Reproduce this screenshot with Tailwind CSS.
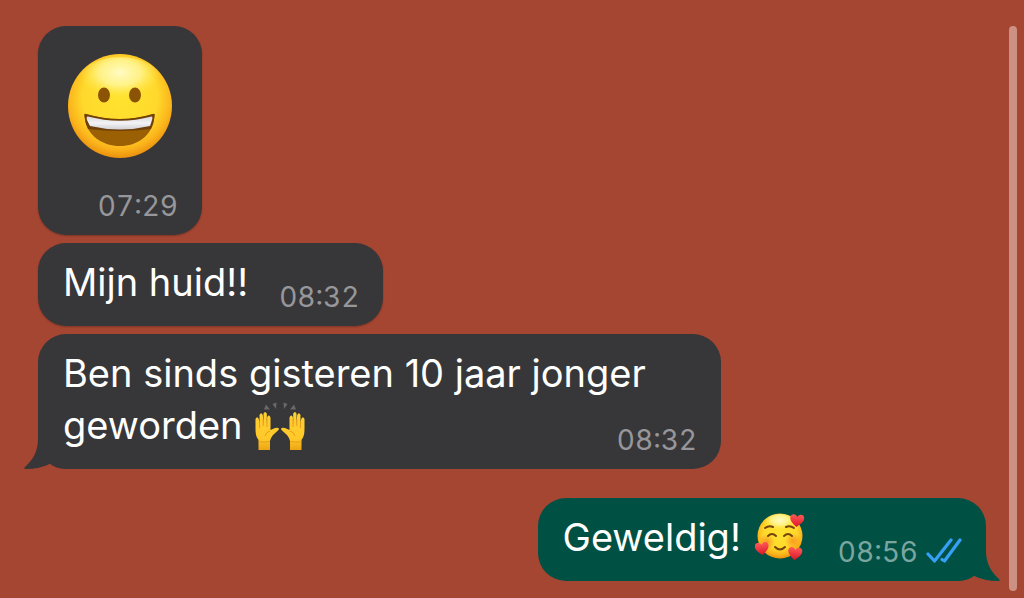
<!DOCTYPE html>
<html lang="nl">
<head>
<meta charset="utf-8">
<meta name="viewport" content="width=device-width, initial-scale=1">
<title>Chat</title>
<script src="https://cdn.jsdelivr.net/npm/@tailwindcss/browser@4"></script>
</head>
<body class="min-h-screen bg-[#a54632] font-['Inter','Liberation_Sans',sans-serif] text-white">
<div class="flex min-h-screen items-stretch">
  <main class="flex grow flex-col items-start gap-2 pt-[26px] pl-[38px] pr-[23px] pb-4">

    <article class="flex w-[164px] flex-col items-center rounded-[28px] bg-[#373739] pt-7 pb-[13px] shadow-[0_1px_2px_rgba(0,0,0,0.25)]">
      <svg class="size-[104px]" viewBox="0 0 104 104" role="img" aria-label="😀">
        <defs>
          <radialGradient id="face" cx="50%" cy="42%" r="60%">
            <stop offset="0" stop-color="#ffe32f"/><stop offset=".6" stop-color="#ffd92c"/><stop offset=".82" stop-color="#fbb51b"/><stop offset="1" stop-color="#e8880c"/>
          </radialGradient>
          <radialGradient id="shine" cx="50%" cy="30%" r="50%">
            <stop offset="0" stop-color="#fffbc4"/><stop offset=".5" stop-color="#fff79c" stop-opacity=".8"/><stop offset="1" stop-color="#ffe840" stop-opacity="0"/>
          </radialGradient>
          <linearGradient id="teeth" x1="0" y1="0" x2="0" y2="1">
            <stop offset="0" stop-color="#d8d8dc"/><stop offset=".5" stop-color="#f4f4f7"/><stop offset="1" stop-color="#d0d0d4"/>
          </linearGradient>
        </defs>
        <circle cx="52" cy="52" r="52" fill="url(#face)"/>
        <ellipse cx="52" cy="29" rx="42" ry="26" fill="url(#shine)"/>
        <ellipse cx="36" cy="41" rx="6" ry="7.5" fill="#8b5306"/>
        <ellipse cx="67" cy="41" rx="6" ry="7.5" fill="#8b5306"/>
        <path d="M18 60Q52 70 85 60Q87 59 86.500 62C85 82 69 92 52 92S18 82 16.500 62Q16 59 18 60Z" fill="#9a6003"/>
        <path d="M18 60Q52 70 85 60Q87 59 86.500 62Q86 69 83 75Q52 79 20 75Q17 69 16.500 62Q16 59 18 60Z" fill="#70400a"/>
        <path d="M20 62.500Q52 71 83.500 62.500Q85 62 84 66L82 72Q52 79 22 72L19 66Q18 62 20 62.500Z" fill="url(#teeth)"/>
      </svg>
      <time class="mt-8 mr-6 self-end text-[28px] leading-8 text-[#97979b] tabular-nums">07:29</time>
    </article>

    <article class="flex items-end gap-[31px] rounded-[28px] bg-[#373739] pt-[13px] pr-6 pb-[13px] pl-[25px] shadow-[0_1px_2px_rgba(0,0,0,0.25)]">
      <p class="pb-[5px] text-[38px] leading-[52px]">Mijn huid!!</p>
      <time class="text-[28px] leading-8 text-[#97979b] tabular-nums">08:32</time>
    </article>

    <article class="relative grid w-[683px] max-w-full rounded-[28px] bg-[#373739] pt-[13px] pr-6 pb-[13px] pl-[25px]">
      <svg class="absolute bottom-0 -left-[14px] h-[40px] w-[42px]" viewBox="0 0 42 40" aria-hidden="true">
        <path d="M14 0V10C14 22 9 31 1 38Q-1 40 2 40Q16 40 26 35Q32 40 42 40V0Z" fill="#373739"/>
        <path d="M10 40Q20 38 26 35Q32 40 42 40Z" fill="#a54632"/>
      </svg>
      <p class="relative col-start-1 row-start-1 pb-[5px] text-[38px] leading-[52px]">Ben sinds gisteren 10 jaar jonger<br>geworden
        <svg class="ml-0.5 inline-block h-[50px] w-[50px] align-[-11px]" viewBox="0 0 50 50" role="img" aria-label="🙌">
          <defs>
            <linearGradient id="skin" x1="0" y1="0" x2="0" y2="1"><stop offset="0" stop-color="#ffcf35"/><stop offset=".7" stop-color="#ffc928"/><stop offset="1" stop-color="#eca414"/></linearGradient>
            <g id="hand">
              <path d="M3.500 50V40C1 37 .500 33 .500 29V19Q2 15.500 3.800 19L4.500 25V15Q6 11.500 7.800 15L8.500 24V13.500Q10 10.500 11.800 13.500V24L12.200 17Q14 14 15.500 17.500V30L20 28Q25 27 23.500 30L18 35Q15.500 38 15 41V50Z" fill="url(#skin)"/>
              <path d="M4.500 28V21M8.200 26V19M12 27V19M15 31Q11 32 10 36M3.500 41.500Q9 43 15 41.500" fill="none" stroke="#e5981b" stroke-width=".9"/>
            </g>
          </defs>
          <use href="#hand"/><use href="#hand" transform="translate(50 0) scale(-1 1)"/>
          <g fill="#68686b"><path d="M11 4.500L15 9.500L9 9.500Z"/><path d="M17.500 4L21.500 2.500L21 9Z"/><path d="M28.500 2.500L32.500 4L29 9Z"/><path d="M39 4.500L41 9.500L35 9.500Z"/></g>
        </svg></p>
      <time class="relative col-start-1 row-start-1 self-end justify-self-end text-[28px] leading-8 text-[#97979b] tabular-nums">08:32</time>
    </article>

    <article class="relative mt-[21px] flex items-end self-end rounded-[28px] bg-[#015044] pt-[13px] pr-6 pb-[13px] pl-[25px]">
      <svg class="absolute bottom-0 -right-[14px] h-[40px] w-[42px]" viewBox="0 0 42 40" aria-hidden="true">
        <path d="M28 0V10C28 22 33 31 41 38Q43 40 40 40Q26 40 16 35Q10 40 0 40V0Z" fill="#015044"/>
        <path d="M32 40Q22 38 16 35Q10 40 0 40Z" fill="#a54632"/>
      </svg>
      <p class="relative flex items-center gap-[14px] pb-[5px] text-[38px] leading-[52px]">Geweldig!
        <svg class="size-[50px]" viewBox="0 0 50 50" role="img" aria-label="🥰">
          <defs>
            <linearGradient id="heart" x1="0" y1="0" x2="0" y2="1"><stop offset="0" stop-color="#ff5a55"/><stop offset="1" stop-color="#d9162b"/></linearGradient>
            <path id="h" d="M7 13C3 10 0 7 0 4C0 0 5-1 7 3C9-1 14 0 14 4C14 7 11 10 7 13Z" fill="url(#heart)"/>
            <radialGradient id="blush"><stop offset="0" stop-color="#f77f1c" stop-opacity=".7"/><stop offset="1" stop-color="#f77f1c" stop-opacity="0"/></radialGradient>
          </defs>
          <circle cx="25" cy="24" r="22.500" fill="url(#face)"/>
          <ellipse cx="25" cy="12" rx="17" ry="10" fill="url(#shine)"/>
          <circle cx="12" cy="30" r="8" fill="url(#blush)"/><circle cx="38" cy="29" r="8" fill="url(#blush)"/>
          <g fill="none" stroke="#74440a" stroke-width="2" stroke-linecap="round">
            <path d="M10 16Q14 13 18 15M31 15Q35 13 39 16M13 24Q17 20 21 24M29 24Q33 20 37 24M20 35Q25 40 30 35"/>
          </g>
          <use href="#h" transform="translate(35 2) rotate(5 7 7)"/><use href="#h" transform="translate(0 30) rotate(-8 7 7)"/><use href="#h" transform="translate(33 35) rotate(6 7 7)"/>
        </svg></p>
      <time class="relative ml-[33px] text-[28px] leading-8 text-[#7ba69f] tabular-nums">08:56</time>
      <svg class="relative mb-[5px] ml-2 h-[26px] w-9" viewBox="0 0 36 26" fill="none" stroke="#35a0f5" stroke-width="3.200" stroke-linecap="round" stroke-linejoin="round" role="img" aria-label="Gelezen">
        <path d="M2 17L8.500 24L25 3"/><path d="M16 22.500L18.500 24L34 3"/>
      </svg>
    </article>
  </main>
  <div class="mt-[26px] mr-[7px] mb-[7px] w-2 shrink-0 rounded-full bg-[#cd9184]" aria-hidden="true"></div>
</div>
</body>
</html>
